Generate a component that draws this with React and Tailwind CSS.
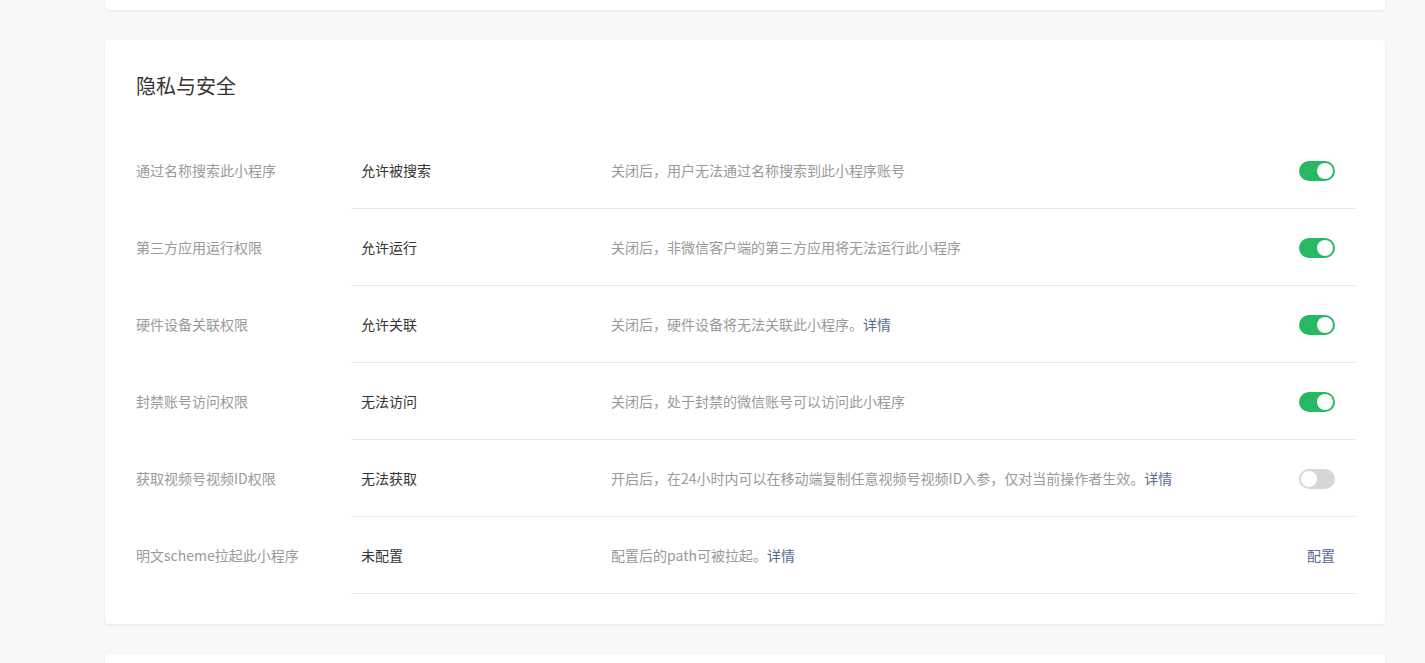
import React from "react";

const FONT = { fontFamily: '"Noto Sans CJK SC", "Noto Sans", sans-serif' };

const rows = [
  { label: "通过名称搜索此小程序", value: "允许被搜索", desc: "关闭后，用户无法通过名称搜索到此小程序账号", on: true },
  { label: "第三方应用运行权限", value: "允许运行", desc: "关闭后，非微信客户端的第三方应用将无法运行此小程序", on: true },
  { label: "硬件设备关联权限", value: "允许关联", desc: "关闭后，硬件设备将无法关联此小程序。", link: "详情", on: true },
  { label: "封禁账号访问权限", value: "无法访问", desc: "关闭后，处于封禁的微信账号可以访问此小程序", on: true },
  { label: "获取视频号视频ID权限", value: "无法获取", desc: "开启后，在24小时内可以在移动端复制任意视频号视频ID入参，仅对当前操作者生效。", link: "详情", on: false },
  { label: "明文scheme拉起此小程序", value: "未配置", desc: "配置后的path可被拉起。", link: "详情", action: "配置" },
];

function Toggle({ on }) {
  return (
    <div
      className={`w-[36px] h-[20px] rounded-full flex items-center p-[2px] mt-[1px] ${
        on ? "bg-[#26b862] justify-end" : "bg-[#d6d6d6] justify-start"
      }`}
    >
      <div className="w-[16px] h-[16px] rounded-full bg-white" />
    </div>
  );
}

export default function App() {
  return (
    <div className="min-h-[663px] bg-[#f6f8f9] pl-[105px] pr-[40px] flex flex-col gap-[30px] overflow-hidden" style={FONT}>
      <div className="w-[1280px] h-[10px] bg-white rounded-b-[4px] shadow-[0_1px_3px_rgba(0,0,0,0.08)]" />
      <div className="w-[1280px] bg-white rounded-[4px] shadow-[0_1px_3px_rgba(0,0,0,0.08)] pt-[32px] pb-[30px] pl-[31px] pr-[30px]">
        <div className="text-[20px] leading-[28px] text-[#353535]">隐私与安全</div>
        <div className="mt-[32px] flex flex-col">
          {rows.map((r, i) => (
            <div key={i} className="flex h-[77px] items-center">
              <div className="w-[215px] shrink-0 text-[14px] text-[#9a9a9a] pb-[1px]">{r.label}</div>
              <div className="flex-1 h-full flex items-center border-b border-[#e7e7e7] pl-[10px] pr-[20px]">
                <div className="w-[250px] shrink-0 text-[14px] text-[#353535]">{r.value}</div>
                <div className="flex-1 text-[14px] text-[#9a9a9a]">
                  {r.desc}
                  {r.link && <span className="text-[#576b95]">{r.link}</span>}
                </div>
                {r.action ? (
                  <span className="text-[14px] text-[#576b95]">{r.action}</span>
                ) : (
                  <Toggle on={r.on} />
                )}
              </div>
            </div>
          ))}
        </div>
      </div>
      <div className="w-[1280px] h-[40px] bg-white rounded-t-[4px] shadow-[0_1px_3px_rgba(0,0,0,0.08)] shrink-0" />
    </div>
  );
}
